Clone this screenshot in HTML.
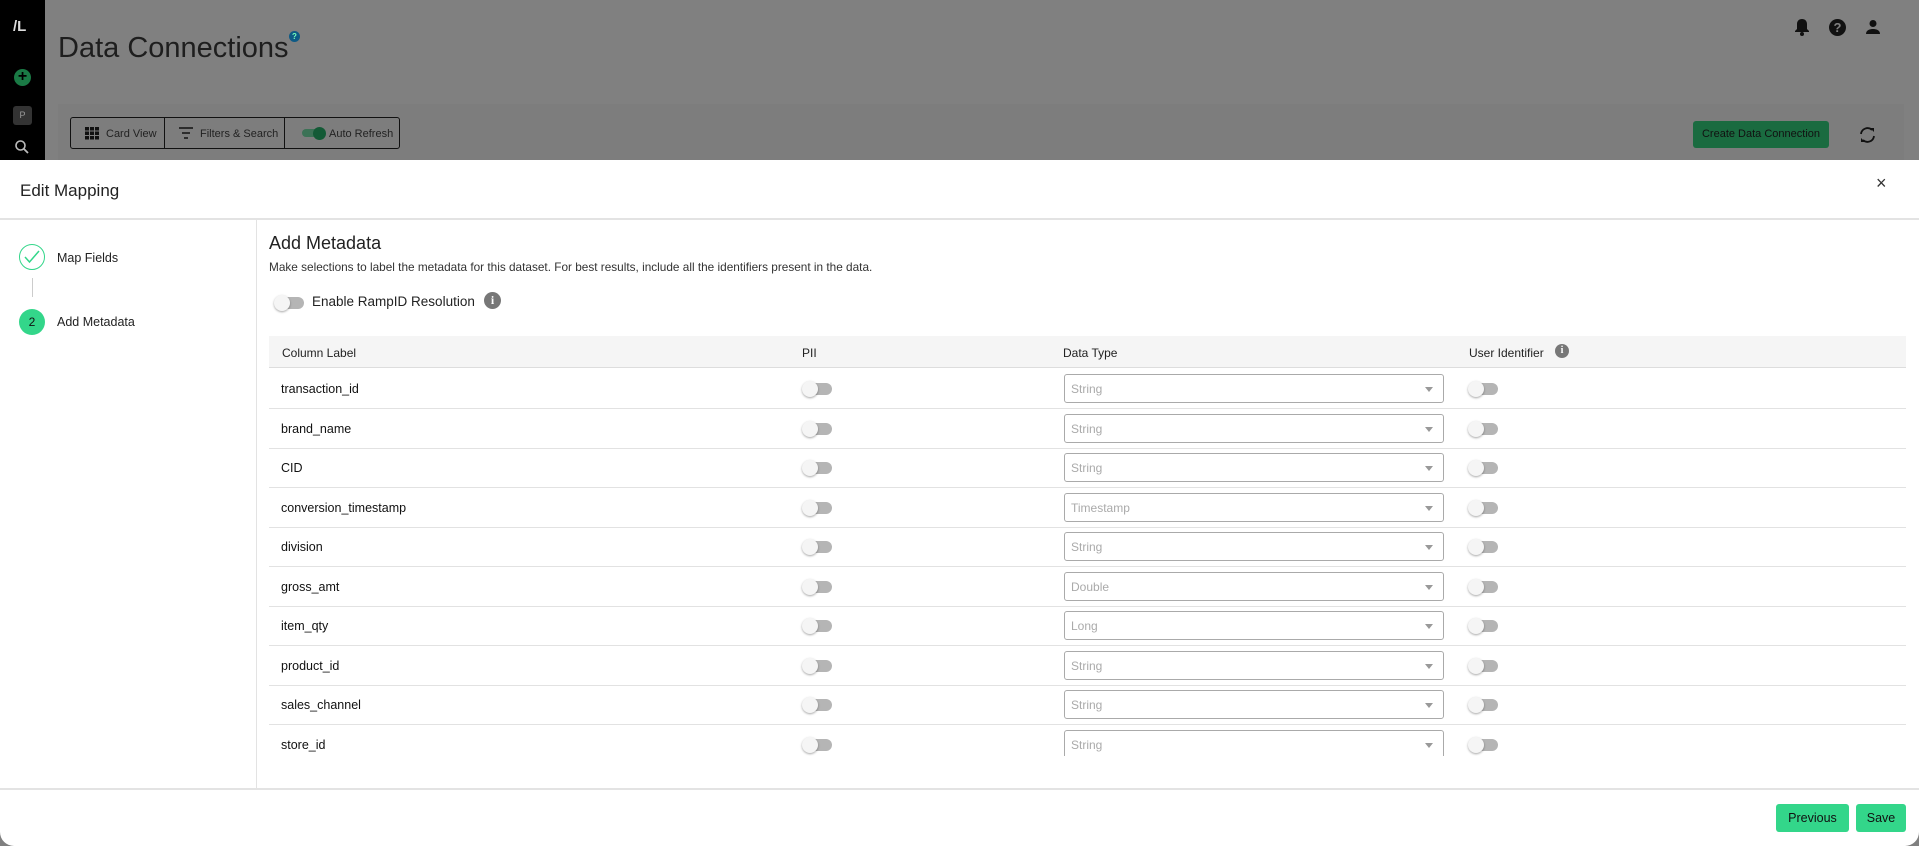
<!DOCTYPE html>
<html><head><meta charset="utf-8"><style>
*{box-sizing:border-box;margin:0;padding:0}
body{width:1919px;height:846px;overflow:hidden;background:#808080;font-family:"Liberation Sans",sans-serif;position:relative}
.abs{position:absolute}
.tg{position:absolute;width:29px;height:12px;border-radius:6px;background:#b5b5b5}
.tg::before{content:"";position:absolute;left:-1px;top:-2px;width:16px;height:16px;border-radius:50%;background:#f5f5f5;box-shadow:0 1px 2px rgba(0,0,0,.35)}
.row{position:absolute;left:269px;width:1637px;height:40px;border-bottom:1px solid #e2e2e2}
.row .lbl{position:absolute;left:12px;top:13px;font-size:12.5px;color:#111}
.sel{position:absolute;left:795px;top:5px;width:380px;height:29px;border:1px solid #aaa;border-radius:3px;font-size:12px;color:#aaa;padding:7px 6px}
.sel::after{content:"";position:absolute;right:10px;top:12px;border:4px solid transparent;border-top:5px solid #999}
.btn{position:absolute;background:#33d68a;border-radius:3px;font-size:12.5px;color:#111;text-align:center;line-height:28px}
</style></head><body>
<div class="abs" style="left:0;top:0;width:45px;height:160px;background:#000"></div>
<div class="abs" style="left:13px;top:18px;color:#ddd;font-weight:bold;font-size:15px">/L</div>
<div class="abs" style="left:14px;top:69px;width:17px;height:17px;border-radius:50%;background:#1a7a45;color:#000;font-size:16px;line-height:16px;text-align:center;font-weight:bold">+</div>
<div class="abs" style="left:13px;top:106px;width:19px;height:19px;border-radius:3px;background:#333;color:#999;font-size:9px;line-height:19px;text-align:center">P</div>
<svg class="abs" style="left:14px;top:139px" width="16" height="16" viewBox="0 0 16 16"><circle cx="6.5" cy="6.5" r="4.5" stroke="#bbb" stroke-width="1.6" fill="none"/><path d="M10 10l4 4" stroke="#bbb" stroke-width="1.8"/></svg>
<div class="abs" style="left:58px;top:32px;font-size:29px;color:#1e1e1e">Data Connections</div>
<div class="abs" style="left:289px;top:31px;width:11px;height:11px;border-radius:50%;background:#0e5a85;color:#7fb;font-size:8px;line-height:11px;text-align:center;font-weight:bold">?</div>
<svg class="abs" style="left:1794px;top:18px" width="16" height="18" viewBox="0 0 16 18"><path d="M8 1c-3 0-5 2-5 5v5l-2 2v1h14v-1l-2-2V6c0-3-2-5-5-5z" fill="#111"/><circle cx="8" cy="16" r="2" fill="#111"/></svg>
<div class="abs" style="left:1829px;top:19px;width:17px;height:17px;border-radius:50%;background:#111;color:#808080;font-size:13px;font-weight:bold;line-height:17px;text-align:center">?</div>
<svg class="abs" style="left:1865px;top:19px" width="16" height="16" viewBox="0 0 16 16"><circle cx="8" cy="4.5" r="3.5" fill="#111"/><path d="M1 15c0-4 4-5 7-5s7 1 7 5z" fill="#111"/></svg>
<div class="abs" style="left:58px;top:104px;width:1846px;height:56px;background:#7d7d7d"></div>
<div class="abs" style="left:70px;top:117px;width:330px;height:32px;border:1px solid #111;border-radius:3px"></div>
<div class="abs" style="left:164px;top:117px;width:1px;height:32px;background:#111"></div>
<div class="abs" style="left:284px;top:117px;width:1px;height:32px;background:#111"></div>
<svg class="abs" style="left:85px;top:127px" width="14" height="13"><g fill="#111"><rect x="0" y="0" width="4" height="3.5"/><rect x="5" y="0" width="4" height="3.5"/><rect x="10" y="0" width="4" height="3.5"/><rect x="0" y="4.5" width="4" height="3.5"/><rect x="5" y="4.5" width="4" height="3.5"/><rect x="10" y="4.5" width="4" height="3.5"/><rect x="0" y="9" width="4" height="3.5"/><rect x="5" y="9" width="4" height="3.5"/><rect x="10" y="9" width="4" height="3.5"/></g></svg>
<div class="abs" style="left:106px;top:128px;font-size:11px;color:#222">Card View</div>
<svg class="abs" style="left:179px;top:127px" width="14" height="12"><path d="M0 1h14M3 6h8M5 11h4" stroke="#111" stroke-width="1.5"/></svg>
<div class="abs" style="left:200px;top:128px;font-size:11px;color:#222">Filters &amp; Search</div>
<div class="abs" style="left:302px;top:129px;width:20px;height:8px;border-radius:4px;background:#3c7256"></div>
<div class="abs" style="left:313px;top:127px;width:13px;height:13px;border-radius:50%;background:#135a36"></div>
<div class="abs" style="left:329px;top:128px;font-size:11px;color:#222">Auto Refresh</div>
<div class="abs" style="left:1693px;top:121px;width:136px;height:27px;background:#1a6b40;border-radius:3px;font-size:11px;color:#111;text-align:center;line-height:27px">Create Data Connection</div>
<svg class="abs" style="left:1858px;top:126px" width="19" height="18" viewBox="0 0 19 18"><path d="M3 8a6.5 6.5 0 0 1 11-4M16 10a6.5 6.5 0 0 1-11 4" stroke="#111" stroke-width="1.8" fill="none"/><path d="M12 2l4 0 0 4zM7 16l-4 0 0-4z" fill="#111"/></svg>

<div class="abs" style="left:0;top:160px;width:1919px;height:686px;background:#fff;border-radius:0 0 14px 14px"></div>
<div class="abs" style="left:20px;top:181px;font-size:17px;color:#222">Edit Mapping</div>
<div class="abs" style="left:1876px;top:173px;font-size:18px;color:#333">×</div>
<div class="abs" style="left:0;top:218px;width:1919px;height:2px;background:#e3e3e3"></div>
<div class="abs" style="left:256px;top:220px;width:1px;height:569px;background:#e3e3e3"></div>
<div class="abs" style="left:19px;top:244px;width:26px;height:26px;border-radius:50%;border:1.5px solid #33d68a"></div>
<svg class="abs" style="left:24px;top:250px" width="16" height="14"><path d="M1 7l4.5 5L15 1" stroke="#33d68a" stroke-width="1.5" fill="none"/></svg>
<div class="abs" style="left:57px;top:251px;font-size:12.5px;color:#222">Map Fields</div>
<div class="abs" style="left:32px;top:278px;width:1px;height:19px;background:#ccc"></div>
<div class="abs" style="left:19px;top:309px;width:26px;height:26px;border-radius:50%;background:#33d68a;font-size:12px;line-height:26px;text-align:center;color:#111">2</div>
<div class="abs" style="left:57px;top:315px;font-size:12.5px;color:#222">Add Metadata</div>

<div class="abs" style="left:269px;top:233px;font-size:18px;color:#222">Add Metadata</div>
<div class="abs" style="left:269px;top:260px;font-size:11.8px;color:#333">Make selections to label the metadata for this dataset. For best results, include all the identifiers present in the data.</div>
<div class="tg" style="left:275px;top:297px"></div>
<div class="abs" style="left:312px;top:294px;font-size:13.5px;color:#222">Enable RampID Resolution</div>
<div class="abs" style="left:484px;top:292px;width:17px;height:17px;border-radius:50%;background:#777;color:#fff;font-size:12px;font-weight:bold;line-height:17px;text-align:center;font-family:'Liberation Serif',serif">i</div>
<div class="abs" style="left:269px;top:336px;width:1637px;height:32px;background:#f5f5f5;border-bottom:1px solid #ddd"></div>
<div class="abs" style="left:282px;top:346px;font-size:12px;color:#222">Column Label</div>
<div class="abs" style="left:802px;top:346px;font-size:12px;color:#222">PII</div>
<div class="abs" style="left:1063px;top:346px;font-size:12px;color:#222">Data Type</div>
<div class="abs" style="left:1469px;top:346px;font-size:12px;color:#222">User Identifier</div>
<div class="abs" style="left:1555px;top:344px;width:14px;height:14px;border-radius:50%;background:#777;color:#fff;font-size:10px;font-weight:bold;line-height:14px;text-align:center;font-family:'Liberation Serif',serif">i</div>

<div class="abs" style="left:0;top:368px;width:1919px;height:388px;overflow:hidden">
<div style="position:relative;top:-368px">
<div class="row" style="top:369px"><span class="lbl">transaction_id</span><div class="tg" style="left:534px;top:14px"></div><div class="sel">String</div><div class="tg" style="left:1200px;top:14px"></div></div>
<div class="row" style="top:409px"><span class="lbl">brand_name</span><div class="tg" style="left:534px;top:14px"></div><div class="sel">String</div><div class="tg" style="left:1200px;top:14px"></div></div>
<div class="row" style="top:448px"><span class="lbl">CID</span><div class="tg" style="left:534px;top:14px"></div><div class="sel">String</div><div class="tg" style="left:1200px;top:14px"></div></div>
<div class="row" style="top:488px"><span class="lbl">conversion_timestamp</span><div class="tg" style="left:534px;top:14px"></div><div class="sel">Timestamp</div><div class="tg" style="left:1200px;top:14px"></div></div>
<div class="row" style="top:527px"><span class="lbl">division</span><div class="tg" style="left:534px;top:14px"></div><div class="sel">String</div><div class="tg" style="left:1200px;top:14px"></div></div>
<div class="row" style="top:567px"><span class="lbl">gross_amt</span><div class="tg" style="left:534px;top:14px"></div><div class="sel">Double</div><div class="tg" style="left:1200px;top:14px"></div></div>
<div class="row" style="top:606px"><span class="lbl">item_qty</span><div class="tg" style="left:534px;top:14px"></div><div class="sel">Long</div><div class="tg" style="left:1200px;top:14px"></div></div>
<div class="row" style="top:646px"><span class="lbl">product_id</span><div class="tg" style="left:534px;top:14px"></div><div class="sel">String</div><div class="tg" style="left:1200px;top:14px"></div></div>
<div class="row" style="top:685px"><span class="lbl">sales_channel</span><div class="tg" style="left:534px;top:14px"></div><div class="sel">String</div><div class="tg" style="left:1200px;top:14px"></div></div>
<div class="row" style="top:725px"><span class="lbl">store_id</span><div class="tg" style="left:534px;top:14px"></div><div class="sel">String</div><div class="tg" style="left:1200px;top:14px"></div></div>
</div></div>

<div class="abs" style="left:0;top:788px;width:1919px;height:2px;background:#e3e3e3"></div>
<div class="btn" style="left:1776px;top:804px;width:73px">Previous</div>
<div class="btn" style="left:1856px;top:804px;width:50px">Save</div>
</body></html>
